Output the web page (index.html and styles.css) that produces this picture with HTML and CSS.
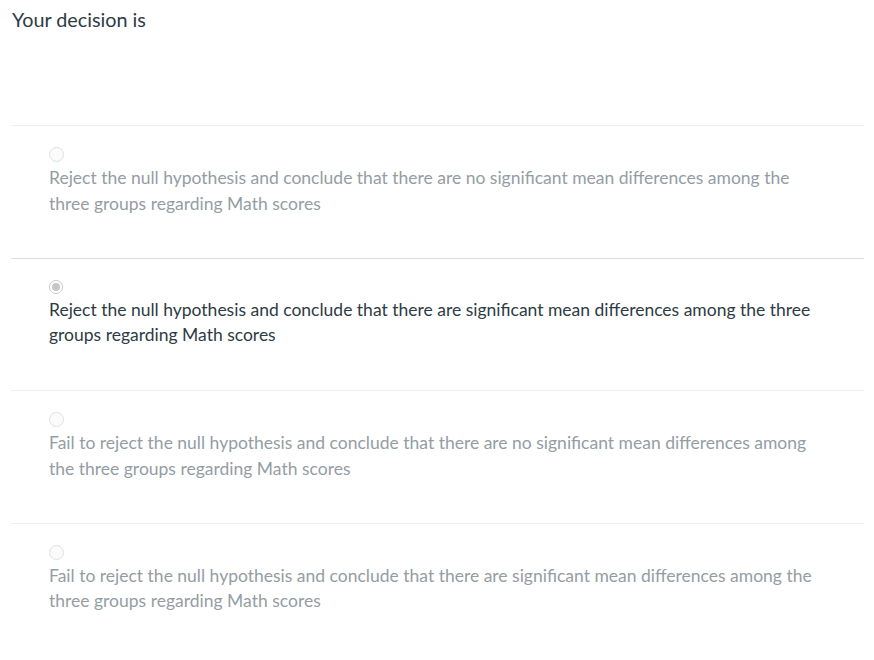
FILE: index.html
```html
<!DOCTYPE html>
<html>
<head>
<meta charset="utf-8">
<link rel="stylesheet" href="styles.css">
</head>
<body>
<div class="question">
  <div class="prompt">Your decision is</div>
  <div class="answers">
    <div class="answer">
      <span class="radio"></span>
      <div class="label">Reject the null hypothesis and conclude that there are no significant mean differences among the three groups regarding Math scores</div>
    </div>
    <div class="answer selected">
      <span class="radio checked"></span>
      <div class="label">Reject the null hypothesis and conclude that there are significant mean differences among the three groups regarding Math scores</div>
    </div>
    <div class="answer">
      <span class="radio"></span>
      <div class="label">Fail to reject the null hypothesis and conclude that there are no significant mean differences among the three groups regarding Math scores</div>
    </div>
    <div class="answer">
      <span class="radio"></span>
      <div class="label">Fail to reject the null hypothesis and conclude that there are significant mean differences among the three groups regarding Math scores</div>
    </div>
  </div>
</div>
</body>
</html>
```
FILE: styles.css
```css
html, body {
  margin: 0;
  padding: 0;
  background: #fff;
}
body {
  font-family: Lato, "Open Sans", sans-serif;
  color: #2d3b45;
}
.question {
  padding: 0 10px 0 11px;
}
.prompt {
  font-size: 19.8px;
  line-height: 27px;
  padding-top: 6px;
  padding-left: 1px;
  height: 119px;
  color: #2d3b45;
}
.answers {
  display: flex;
  flex-direction: column;
}
.answer {
  border-top: 1px solid #eeeeee;
  padding: 21px 36px 0 38px;
  height: 110.5px;
}
.answer.selected {
  border-top-color: #dcdcdc;
}
.radio {
  display: block;
  width: 13px;
  height: 13px;
  border: 1px solid #e0e0e0;
  border-radius: 50%;
  background: #fbfbfb;
  margin-bottom: 3px;
  position: relative;
}
.radio.checked {
  width: 12px;
  height: 12px;
  border: 1.5px solid #c9c9c9;
  background: #fff;
}
.radio.checked::after {
  content: "";
  position: absolute;
  left: 2px;
  top: 2px;
  width: 8px;
  height: 8px;
  border-radius: 50%;
  background: #c6c6c6;
}
.label {
  font-size: 17.5px;
  line-height: 25.5px;
  color: #949da4;
}
.selected .label {
  color: #2d3b45;
}
```
